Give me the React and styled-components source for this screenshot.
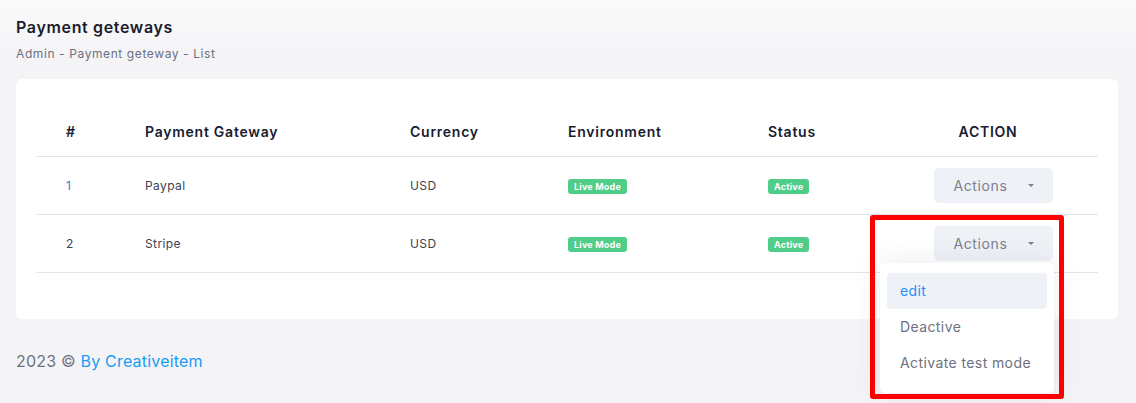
import styled, { createGlobalStyle } from "styled-components";

const GlobalStyle = createGlobalStyle`
    body {
        margin: 0;
        background: linear-gradient(180deg, #fafafb 0px, #f4f4f7 60px);
        font-family: Inter, "Noto Sans", sans-serif;
    }
`;

const gateways = [
    { id: 1, name: "Paypal", currency: "USD", highlight: true },
    { id: 2, name: "Stripe", currency: "USD", open: true },
];

function App() {
    return (
        <Page>
            <GlobalStyle />
            <Title>Payment geteways</Title>
            <Crumbs>Admin - Payment geteway - List</Crumbs>

            <Card>
                <HeadRow>
                    <span>#</span>
                    <span>Payment Gateway</span>
                    <span>Currency</span>
                    <span>Environment</span>
                    <span>Status</span>
                    <ActionHead>ACTION</ActionHead>
                </HeadRow>

                {gateways.map((g) => (
                    <Row key={g.id}>
                        <Num $blue={g.highlight}>{g.id}</Num>
                        <span>{g.name}</span>
                        <span>{g.currency}</span>
                        <span>
                            <Badge>Live Mode</Badge>
                        </span>
                        <span>
                            <Badge>Active</Badge>
                        </span>
                        <ActionCell>
                            <ActionButton>
                                Actions
                                <Caret />
                            </ActionButton>
                            {g.open && (
                                <Menu>
                                    <MenuItem $active>edit</MenuItem>
                                    <MenuItem>Deactive</MenuItem>
                                    <MenuItem>Activate test mode</MenuItem>
                                </Menu>
                            )}
                        </ActionCell>
                    </Row>
                ))}
            </Card>

            <Footer>
                2023 © <a>By Creativeitem</a>
            </Footer>

            {/* red highlight drawn over the open menu */}
            <Marker />
        </Page>
    );
}

export default App;

const Page = styled.div`
    position: relative;
    padding: 17px 18px 0 16px;
    min-height: 403px;
    box-sizing: border-box;
`;

const Title = styled.h1`
    margin: 0;
    font-size: 16px;
    font-weight: 600;
    line-height: 20px;
    letter-spacing: 0.65px;
    color: #1b1c2c;
`;

const Crumbs = styled.div`
    margin-top: 9px;
    font-size: 12px;
    line-height: 16px;
    letter-spacing: 0.6px;
    color: #6c6f80;
`;

const Card = styled.div`
    margin-top: 17px;
    background: #fff;
    border-radius: 6px;
    padding: 20px 20px 46px;
`;

const cols = "79px 265px 158px 200px 148px 1fr";

const HeadRow = styled.div`
    display: grid;
    grid-template-columns: ${cols};
    align-items: center;
    height: 58px;
    padding-top: 7px;
    box-sizing: border-box;
    border-bottom: 1px solid #e4e4ec;
    font-size: 14px;
    font-weight: 600;
    letter-spacing: 0.75px;
    color: #181c32;

    & > span {
        padding-left: 30px;
    }
`;

const ActionHead = styled.span`
    && {
        padding-left: 0;
        text-align: center;
        margin-left: -8px;
    }
`;

const Row = styled.div`
    display: grid;
    grid-template-columns: ${cols};
    align-items: center;
    height: 58px;
    box-sizing: border-box;
    border-bottom: 1px solid #e4e4ec;
    font-size: 12px;
    letter-spacing: 0.4px;
    color: #3d3f52;

    & > span {
        padding-left: 30px;
    }
`;

const Num = styled.span`
    color: ${(p) => (p.$blue ? "#2583cf" : "#3d3f52")};
`;

const Badge = styled.span`
    display: inline-block;
    background: #50cd89;
    color: #fff;
    font-size: 9px;
    font-weight: 700;
    line-height: 15px;
    padding: 0 6px;
    border-radius: 3px;
    letter-spacing: 0.2px;
`;

const ActionCell = styled.span`
    position: relative;
    display: flex;
    justify-content: center;

    && {
        padding-left: 0;
    }
`;

const ActionButton = styled.button`
    display: flex;
    align-items: center;
    width: 119px;
    height: 35px;
    margin-left: 2px;
    padding: 0 0 0 20px;
    border: none;
    border-radius: 5px;
    background: #eef1f6;
    color: #7c7f8f;
    font-family: inherit;
    font-size: 14px;
    letter-spacing: 0.6px;
`;

const Caret = styled.span`
    margin-left: 21px;
    width: 0;
    height: 0;
    border-left: 3px solid transparent;
    border-right: 3px solid transparent;
    border-top: 3.5px solid #7c7f8f;
`;

const Menu = styled.div`
    position: absolute;
    top: 37px;
    left: -6px;
    width: 174px;
    padding: 10px 7px 12px;
    box-sizing: border-box;
    background: #fff;
    border-radius: 5px;
    box-shadow: 0 0 30px rgba(70, 70, 100, 0.1);
    z-index: 2;
`;

const MenuItem = styled.div`
    height: 36px;
    line-height: 36px;
    padding-left: 13px;
    border-radius: 4px;
    font-size: 14px;
    letter-spacing: 0.4px;
    background: ${(p) => (p.$active ? "#eef1f6" : "transparent")};
    color: ${(p) => (p.$active ? "#1e90ff" : "#6d7080")};
`;

const Footer = styled.div`
    margin-top: 31px;
    font-size: 16px;
    line-height: 22px;
    letter-spacing: 0.2px;
    color: #6d7080;

    & > a {
        color: #1a9cf2;
    }
`;

const Marker = styled.div`
    position: absolute;
    left: 870px;
    top: 215px;
    width: 194px;
    height: 184px;
    box-sizing: border-box;
    border: 5px solid #ff0000;
    border-radius: 3px;
    z-index: 3;
`;
